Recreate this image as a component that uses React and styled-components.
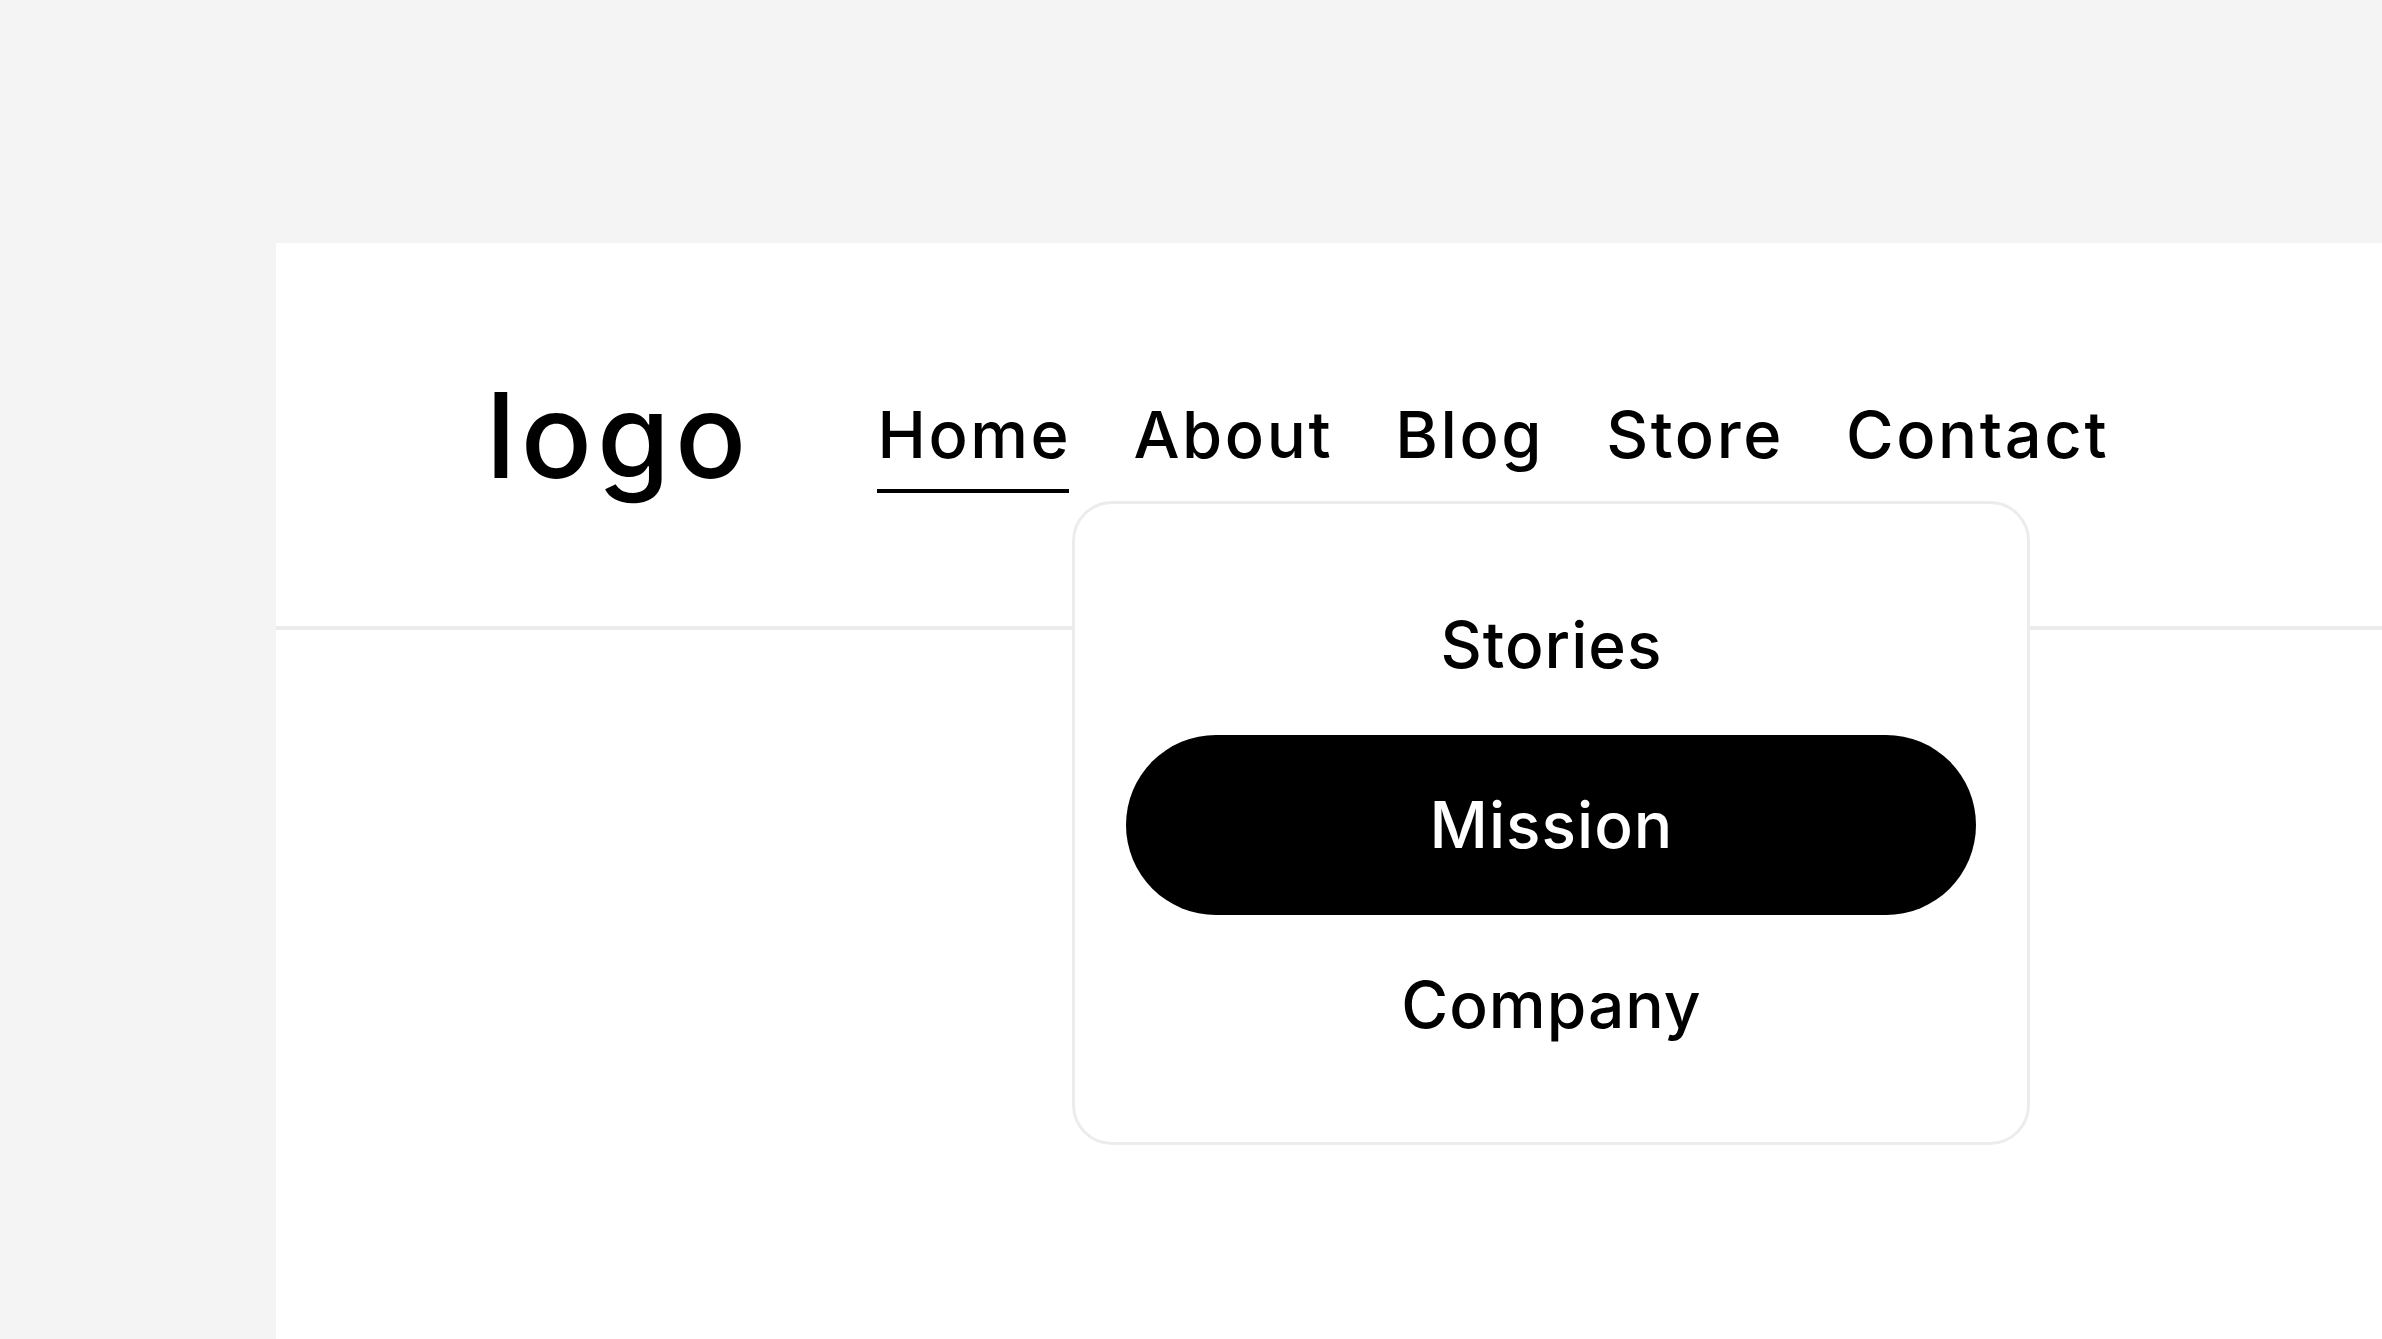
import styled, { createGlobalStyle } from "styled-components";

const GlobalStyle = createGlobalStyle`
  body {
    margin: 0;
    background: #f4f4f4;
    font-family: Inter, "Open Sans", "Liberation Sans", sans-serif;
    color: #000;
  }
`;

const Page = styled.div`
  padding: 243px 0 0 276px;
  min-height: 1339px;
  box-sizing: border-box;
  overflow: hidden;
`;

const Panel = styled.div`
  background: #fff;
  min-height: 1096px;
`;

const Header = styled.header`
  height: 383px;
  border-bottom: 4px solid #ebebeb;
  display: flex;
  align-items: center;
  padding-left: 210px;
`;

const Logo = styled.div`
  font-size: 118px;
  font-weight: 500;
  line-height: 1;
  letter-spacing: 5px;
`;

const Nav = styled.nav`
  position: relative;
  display: flex;
  align-items: center;
  gap: 62px;
  margin-left: 126px;
`;

const NavItem = styled.div`
  position: relative;
  font-size: 65px;
  font-weight: 500;
  line-height: 1.2;
  letter-spacing: 2.6px;

  &::after {
    content: "";
    display: ${(p) => (p.$active ? "block" : "none")};
    position: absolute;
    left: 0;
    right: 2px;
    top: calc(100% + 15px);
    height: 4px;
    background: #000;
  }
`;

const Dropdown = styled.div`
  position: absolute;
  left: 195px;
  top: calc(100% + 27px);
  width: 958px;
  box-sizing: border-box;
  padding: 51px 51px 47px;
  background: #fff;
  border: 3px solid #ececec;
  border-radius: 40px;
  display: flex;
  flex-direction: column;
`;

const MenuItem = styled.div`
  height: 180px;
  border-radius: 90px;
  display: flex;
  align-items: center;
  justify-content: center;
  font-size: 64px;
  font-weight: 500;
  line-height: 1;
  letter-spacing: 1px;
  background: ${(p) => (p.$active ? "#000" : "transparent")};
  color: ${(p) => (p.$active ? "#fff" : "#000")};
`;

const links = ["Home", "About", "Blog", "Store", "Contact"];
const subLinks = ["Stories", "Mission", "Company"];

export default function App() {
  return (
    <>
      <GlobalStyle />
      <Page>
        <Panel>
          <Header>
            <Logo>logo</Logo>
            <Nav>
              {links.map((link) => (
                <NavItem key={link} $active={link === "Home"}>
                  {link}
                </NavItem>
              ))}
              <Dropdown>
                {subLinks.map((sub) => (
                  <MenuItem key={sub} $active={sub === "Mission"}>
                    {sub}
                  </MenuItem>
                ))}
              </Dropdown>
            </Nav>
          </Header>
        </Panel>
      </Page>
    </>
  );
}
